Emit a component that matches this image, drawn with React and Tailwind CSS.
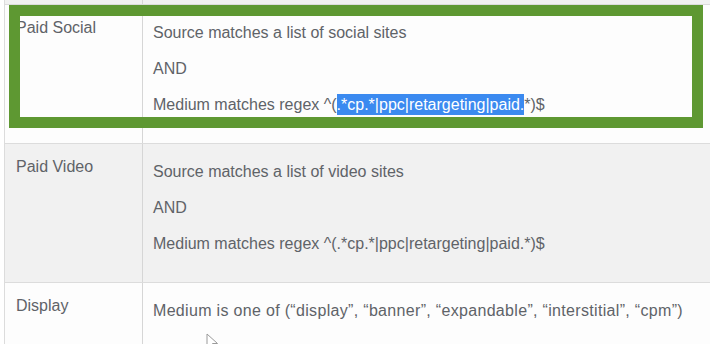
const ROWS = [
  {
    label: 'Paid Social',
    bg: 'bg-[#fdfdfd]',
    lines: [
      'Source matches a list of social sites',
      'AND',
      <>
        Medium matches regex ^(
        <span className="bg-[#3b8af0] text-white py-[2px]">.*cp.*|ppc|retargeting|paid.</span>
        *)$
      </>,
    ],
  },
  {
    label: 'Paid Video',
    bg: 'bg-[#f1f1f1]',
    lines: [
      'Source matches a list of video sites',
      'AND',
      'Medium matches regex ^(.*cp.*|ppc|retargeting|paid.*)$',
    ],
  },
  {
    label: 'Display',
    bg: 'bg-[#fdfdfd]',
    lines: [
      <span className="tracking-[0.32px]">
        Medium is one of (“display”, “banner”, “expandable”, “interstitial”, “cpm”)
      </span>,
    ],
  },
]

function Pointer() {
  return (
    <svg width="14" height="18" viewBox="0 0 14 18" className="absolute left-[206px] top-[333px]">
      <path d="M1 1 L1 15 L4.5 11.5 L7 17 L9 16 L6.5 10.5 L11.5 10.5 Z" fill="#fff" stroke="#9a9a9a" strokeWidth="1" />
    </svg>
  )
}

export default function App() {
  return (
    <div
      className="relative w-[710px] h-[344px] overflow-hidden bg-white text-[16px] leading-[20px] text-[#5f6368]"
      style={{ fontFamily: '"Liberation Sans", Arial, sans-serif' }}
    >
      {/* tail of the row above */}
      <div className="h-[4px] ml-[4px] bg-[#f1f1f1] border-l border-[#dcdcdc] flex">
        <div className="w-[138px] border-r border-[#d6d6d6]" />
      </div>

      {ROWS.map((row) => (
        <div key={row.label} className={`ml-[4px] flex border-l border-t border-[#dcdcdc] ${row.bg}`}>
          <div className="w-[138px] shrink-0 border-r border-[#d6d6d6] pl-[11px] pt-[13px]">{row.label}</div>
          <div className="flex flex-col gap-4 pl-[10px] pt-[18px] pb-[28px]">
            {row.lines.map((line, i) => (
              <div key={i} className="whitespace-nowrap">{line}</div>
            ))}
          </div>
        </div>
      ))}

      {/* highlight box drawn over the first row */}
      <div className="absolute left-[9px] top-[5px] w-[694px] h-[123px] border-[11px] border-[#5e9832]" />

      <Pointer />
    </div>
  )
}
